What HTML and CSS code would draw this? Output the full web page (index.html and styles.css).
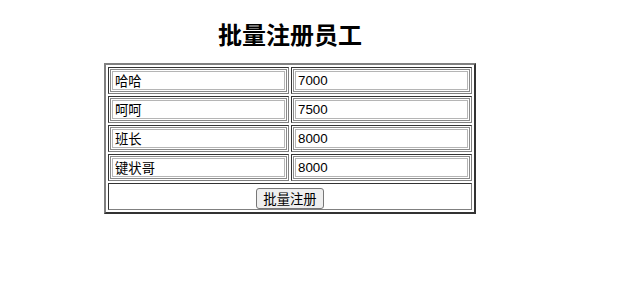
FILE: index.html
```html
<!DOCTYPE html>
<html>
<head>
<meta charset="utf-8">
<link rel="stylesheet" href="styles.css">
</head>
<body>
<div class="wrap">
  <h2 class="title">批量注册员工</h2>
  <table class="grid">
    <tr><td><input class="field" type="text" value="哈哈"></td><td><input class="field" type="text" value="7000"></td></tr>
    <tr><td><input class="field" type="text" value="呵呵"></td><td><input class="field" type="text" value="7500"></td></tr>
    <tr><td><input class="field" type="text" value="班长"></td><td><input class="field" type="text" value="8000"></td></tr>
    <tr><td><input class="field" type="text" value="键状哥"></td><td><input class="field" type="text" value="8000"></td></tr>
    <tr><td colspan="2" class="center"><button class="btn">批量注册</button></td></tr>
  </table>
</div>
</body>
</html>
```
FILE: styles.css
```css
body {
  margin: 8px;
  font-family: "Noto Sans CJK SC", sans-serif;
  background: #fff;
}
.wrap {
  width: 564px;
}
.title {
  text-align: center;
  font-size: 24px;
  font-weight: bold;
  margin: 11px 0 14px;
  line-height: 30px;
  color: #000;
}
.grid {
  margin: 0 auto;
  border: 2px solid;
  border-color: #808080 #333 #333 #808080;
  border-spacing: 2px;
}
.grid td {
  border: 1px solid #333;
  border-color: #333 #808080 #808080 #333;
  padding: 1px;
}
.field {
  box-sizing: border-box;
  width: 177px;
  height: 23px;
  margin: 0;
  padding: 1px 4px;
  border: 1px solid #8a8a8a;
  box-shadow: inset 0 0 0 1px #fff, inset 0 0 0 2px #b5b5b5;
  font-family: "Liberation Sans", "Noto Sans CJK SC", sans-serif;
  font-size: 13.33px;
  color: #000;
  display: block;
}
.grid td.center {
  text-align: center;
  padding: 0;
}
.btn {
  font-family: "Noto Sans CJK SC", sans-serif;
  font-size: 13.33px;
  height: 21px;
  padding: 0 6px;
  line-height: 18px;
  border: 1px solid #777;
  border-radius: 3px;
  background: #efefef;
  color: #000;
  vertical-align: middle;
}
```
